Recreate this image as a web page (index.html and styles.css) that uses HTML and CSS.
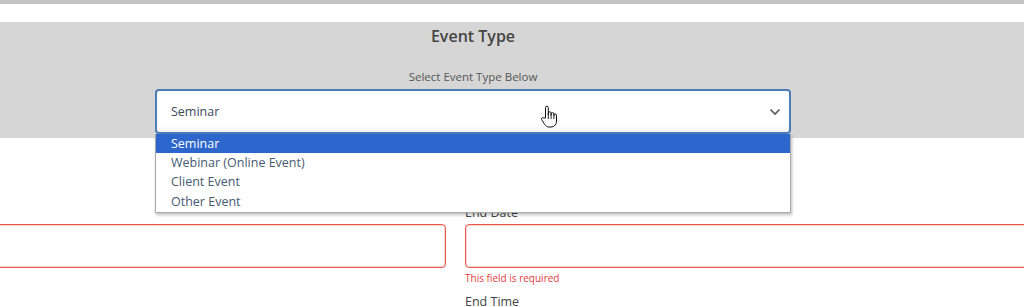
FILE: index.html
```html
<!DOCTYPE html>
<html lang="en">
<head>
  <meta charset="UTF-8" />
  <meta name="viewport" content="width=device-width, initial-scale=1" />
  <title>Event Type</title>
  <link rel="stylesheet" href="styles.css">
</head>
<body>
  <div class="topbar"></div>

  <section class="type-panel">
    <div class="type-inner">
      <h2>Event Type</h2>
      <p class="hint">Select Event Type Below</p>
      <div class="select-wrap">
        <div class="select-box">
          <span>Seminar</span>
          <svg class="chevron" width="12" height="8" viewBox="0 0 12 8">
            <path d="M1.5 1.5 L6 6 L10.5 1.5" fill="none" stroke="#555" stroke-width="1.6" />
          </svg>
        </div>
        <ul class="options">
          <li class="selected">Seminar</li>
          <li>Webinar (Online Event)</li>
          <li>Client Event</li>
          <li>Other Event</li>
        </ul>
        <!-- hand cursor -->
        <svg class="cursor" width="18" height="24" viewBox="0 0 18 24">
          <path d="M5.5 13 V2.6 a1.4 1.4 0 0 1 2.8 0 V10 V8.2 a1.4 1.4 0 0 1 2.8 0 V10.5 V9 a1.4 1.4 0 0 1 2.8 0 V11 V10.2 a1.3 1.3 0 0 1 2.6 0 V16 c0 3.5 -2 6 -5.5 6 H9 c-2 0 -3.2 -1 -4.3 -2.6 L1.6 14.6 a1.3 1.3 0 0 1 2 -1.6 Z" fill="#fff" stroke="#111" stroke-width="1" stroke-linejoin="round" />
          <path d="M8.3 10 V14 M11.1 10.5 V14 M13.9 11 V14" stroke="#111" stroke-width="0.9" />
        </svg>
      </div>
    </div>
  </section>

  <section class="fields">
    <div class="field">
      <label class="hidden-label">Start Date</label>
      <div class="input error"></div>
    </div>
    <div class="field">
      <label>End Date</label>
      <div class="input error"></div>
      <p class="err-msg">This field is required</p>
      <label class="next-label">End Time</label>
    </div>
  </section>
</body>
</html>
```

FILE: styles.css
```css
* {
  margin: 0;
  padding: 0;
  box-sizing: border-box;
  font-family: 'Open Sans', 'Noto Sans', sans-serif;
}

body {
  background: #fff;
  width: 1024px;
  height: 307px;
  overflow: hidden;
}

.topbar {
  height: 4px;
  background: #c4c4c4;
  margin-bottom: 18px;
}

.type-panel {
  background: #d6d6d6;
  height: 116px;
  padding-left: 155px;
}

.type-inner {
  width: 636px;
  display: flex;
  flex-direction: column;
  align-items: center;
}

h2 {
  font-size: 16px;
  font-weight: 600;
  color: #454545;
  line-height: 22px;
  margin-top: 3px;
}

.hint {
  font-size: 11.5px;
  color: #555;
  margin-top: 22px;
  line-height: 16px;
}

.select-wrap {
  position: relative;
  width: 636px;
  margin-top: 4px;
}

.select-box {
  height: 45px;
  background: #fff;
  border: 2px solid #4d7db8;
  border-radius: 4px;
  display: flex;
  align-items: center;
  justify-content: space-between;
  padding: 0 8px 0 14px;
  font-size: 12.5px;
  color: #3d4b5c;
  box-shadow: inset 0 -6px 8px -6px rgba(0, 0, 0, 0.12);
}

.chevron {
  margin-top: 1px;
}

.options {
  list-style: none;
  position: absolute;
  top: 45px;
  left: 0;
  width: 636px;
  background: #fff;
  border: 1px solid #a9a9a9;
  border-top: none;
  box-shadow: 1px 2px 3px rgba(0, 0, 0, 0.25);
  z-index: 10;
  padding-bottom: 1px;
}

.options li {
  font-size: 12.5px;
  line-height: 19.2px;
  padding-left: 15px;
  color: #465a72;
}

.options li.selected {
  background: #2d66cd;
  color: #fff;
}

.cursor {
  position: absolute;
  left: 385px;
  top: 16px;
  z-index: 11;
}

.fields {
  display: grid;
  grid-template-columns: 470px 600px;
  gap: 19px;
  margin-left: -24px;
  margin-top: 66px;
}

.field label {
  display: block;
  font-size: 12.5px;
  color: #444;
  line-height: 18px;
  height: 18px;
  margin-bottom: 2px;
}

.field .hidden-label {
  visibility: hidden;
}

.input {
  height: 44px;
  background: #fff;
  border-radius: 4px;
}

.input.error {
  border: 1px solid #e8574a;
  box-shadow: inset 0 0 0 1px rgba(232, 87, 74, 0.25);
}

.err-msg {
  font-size: 10px;
  color: #e23d3d;
  margin-top: 3px;
  line-height: 14px;
}

.field .next-label {
  margin-top: 8px;
}
```
